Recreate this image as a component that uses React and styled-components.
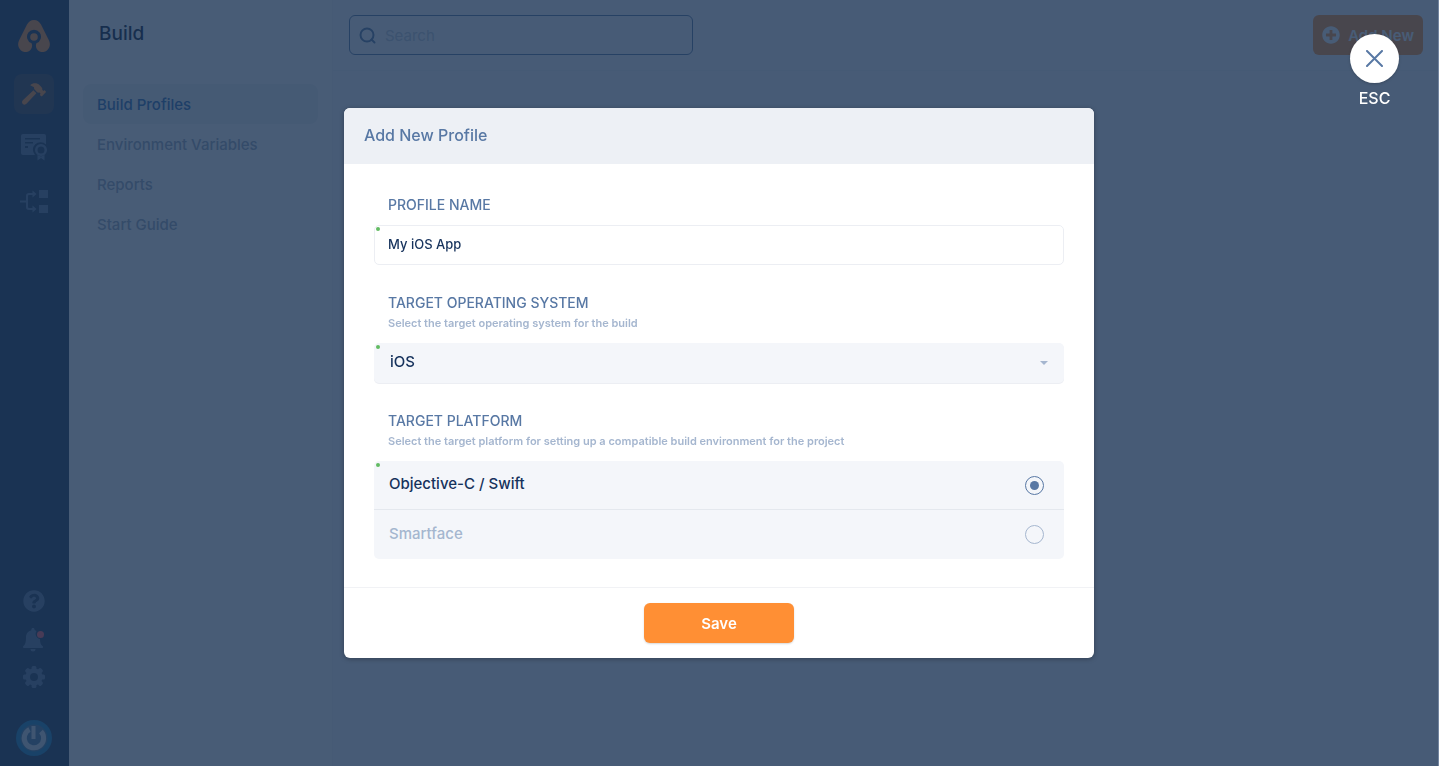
import React from "react";
import styled, { createGlobalStyle } from "styled-components";
import { FaHammer, FaQuestionCircle, FaPlusCircle } from "react-icons/fa";

const GlobalStyle = createGlobalStyle`
  *, *::before, *::after { box-sizing: border-box; }
  html { background: #10141c; }
  body { margin: 0; font-family: Inter, "Liberation Sans", sans-serif; font-size: 15px; color: #16325c; }
  button, input, select { font: inherit; color: inherit; margin: 0; }
  svg { display: block; }
`;

const Page = styled.div`
  display: flex;
  min-height: 100vh;
  background: #fff;
`;

const Rail = styled.nav`
  display: flex;
  flex-direction: column;
  align-items: center;
  width: 69px;
  padding: 20px 1px 10px 0;
  background: #1a3352;
  color: #5d7698;
`;

const RailGroup = styled.div`
  display: flex;
  flex-direction: column;
  align-items: center;
  gap: ${(p) => p.$gap}px;
  margin-top: ${(p) => (p.$end ? "auto" : "22px")};
`;

const RailLink = styled.a`
  display: grid;
  place-items: center;
  width: 40px;
  height: ${(p) => (p.$small ? 22 : 40)}px;
  border-radius: 8px;
  color: ${(p) => (p.$active ? "#ff8f34" : "inherit")};
  background: ${(p) => (p.$active ? "rgba(255, 143, 52, 0.16)" : "transparent")};
`;

const Avatar = styled.a`
  margin-top: 32px;
`;

const SidePanel = styled.aside`
  width: 264px;
  padding: 20px 14px 0 14px;
  background: #fff;
  border-right: 1px solid #f4f6fa;
`;

const PanelTitle = styled.h1`
  margin: 0 0 36px;
  padding-left: 16px;
  font-size: 19px;
  line-height: 28px;
  font-weight: 500;
  color: #0c1c38;
`;

const PanelLink = styled.a`
  display: flex;
  align-items: center;
  height: 40px;
  padding: 0 14px;
  border-radius: 8px;
  font-weight: 500;
  text-decoration: none;
  color: ${(p) => (p.$active ? "#2f6fb5" : "#9aa8bc")};
  background: ${(p) => (p.$active ? "#f0f2f6" : "transparent")};
`;

const Main = styled.main`
  flex: 1;
  background: #f8fafd;
`;

const TopBar = styled.header`
  display: flex;
  align-items: center;
  justify-content: space-between;
  height: 71px;
  padding: 0 16px;
  border-bottom: 1px solid #f1f4f8;
`;

const SearchBox = styled.label`
  display: flex;
  align-items: center;
  gap: 9px;
  width: 344px;
  height: 40px;
  padding: 0 9px;
  border: 1px solid #5878a4;
  border-radius: 6px;
  color: #5878a4;
`;

const SearchInput = styled.input`
  flex: 1;
  min-width: 0;
  padding: 0;
  border: 0;
  outline: 0;
  background: transparent;
  &::placeholder { color: #c0cbda; opacity: 1; }
`;

const AddButton = styled.button`
  display: flex;
  align-items: center;
  gap: 8px;
  height: 40px;
  padding: 0 9px;
  border: 0;
  border-radius: 6px;
  background: #ff8f34;
  color: #fff;
  font-weight: 600;
`;

const Overlay = styled.div`
  position: fixed;
  inset: 0;
  display: flex;
  align-items: center;
  justify-content: center;
  border-right: 1px solid #7385a0;
  background: rgba(26, 51, 84, 0.8);
`;

const Modal = styled.form`
  width: 750px;
  max-width: 100%;
  border-radius: 6px;
  overflow: hidden;
  background: #fff;
  box-shadow: 0 1px 5px rgba(0, 0, 0, 0.3);
`;

const ModalHeader = styled.h2`
  margin: 0;
  padding: 15px 20px 17px;
  font-size: 16px;
  line-height: 24px;
  font-weight: 500;
  color: #5878a4;
  background: #edf0f5;
`;

const ModalBody = styled.div`
  display: flex;
  flex-direction: column;
  gap: 28px;
  padding: 31px 30px 28px;
`;

const Field = styled.div`
  margin: 0;
`;

const Caption = styled.label`
  display: block;
  padding-left: 14px;
  font-size: 14px;
  line-height: 20px;
  font-weight: 500;
  color: #5878a4;
`;

const Hint = styled.p`
  margin: 0;
  padding-left: 14px;
  font-size: 11px;
  line-height: 20px;
  font-weight: 600;
  color: #a5b6cf;
`;

const Control = styled.div`
  position: relative;
  margin-top: 10px;
`;

const RequiredDot = styled.span`
  position: absolute;
  top: 2px;
  left: 2px;
  width: 4px;
  height: 4px;
  border-radius: 50%;
  background: #62bb62;
`;

const TextInput = styled.input`
  display: block;
  width: 100%;
  height: 40px;
  padding: 0 13px 3px;
  border: 1px solid #eceef3;
  border-radius: 5px;
  outline: 0;
  font-size: 13px;
  font-weight: 500;
`;

const Select = styled.select`
  display: block;
  appearance: none;
  width: 100%;
  height: 40px;
  padding: 0 16px 4px;
  border: 0;
  border-radius: 5px;
  box-shadow: 0 1px 0 #eceef3;
  outline: 0;
  font-weight: 500;
  background: #f4f6fa;
`;

const Caret = styled.svg`
  position: absolute;
  top: 18px;
  right: 16px;
  pointer-events: none;
`;

const RadioList = styled.div`
  border-radius: 5px;
  background: #f4f6fa;
`;

const RadioRow = styled.label`
  display: flex;
  align-items: center;
  justify-content: space-between;
  height: 48px;
  padding: 0 20px 0 15px;
  font-weight: 500;
  color: #a5b6cf;
  & + & { height: 50px; border-top: 1px solid #e4e8ee; }
  &:has(input:checked) { color: #16325c; }
`;

const RadioText = styled.span`
  padding-bottom: 3px;
`;

const Radio = styled.input`
  appearance: none;
  display: grid;
  place-items: center;
  width: 19px;
  height: 19px;
  border: 1px solid #a5b6cf;
  border-radius: 50%;
  &:checked { border-color: #5878a4; }
  &:checked::before {
    content: "";
    width: 9px;
    height: 9px;
    border-radius: 50%;
    background: #5878a4;
  }
`;

const ModalFooter = styled.footer`
  display: flex;
  justify-content: center;
  padding: 15px;
  border-top: 1px solid #f1f2f5;
`;

const SaveButton = styled.button`
  width: 150px;
  height: 40px;
  border: 0;
  border-radius: 6px;
  background: #ff8f34;
  box-shadow: 0 1px 2px rgba(0, 0, 0, 0.16);
  color: #fff;
  font-weight: 600;
`;

const CloseButton = styled.button`
  position: absolute;
  top: 34px;
  right: 39px;
  display: flex;
  flex-direction: column;
  align-items: center;
  gap: 5px;
  width: 49px;
  padding: 0;
  border: 0;
  background: none;
  color: #fff;
  font-size: 16px;
  line-height: 20px;
  font-weight: 500;
`;

const CloseDisc = styled.span`
  display: grid;
  place-items: center;
  width: 49px;
  height: 49px;
  border-radius: 50%;
  background: #fff;
  box-shadow: 0 1px 3px rgba(0, 0, 0, 0.2);
`;

const Logo = () => (
  <svg width="32" height="32" viewBox="0 0 32 32" aria-hidden="true">
    <path
      fill="#ff8f34"
      d="M16 0c-3.200 0-5.500 1.700-7 4.600L1 20.500C-.6 24 0 28 3 30.500c3 2.400 7.500 2 9.800-1 1.400-1.800 1.700-4.200.8-6.200A7 7 0 1 1 18.400 23.300c-.9 2-.6 4.400.8 6.200 2.300 3 6.800 3.400 9.800 1 3-2.500 3.600-6.500 2-10L23 4.600C21.500 1.700 19.200 0 16 0z"
    />
    <circle cx="16" cy="17" r="3.800" fill="#ff8f34" />
  </svg>
);

const CertificateIcon = () => (
  <svg width="28" height="28" viewBox="0 0 28 28" fill="currentColor" aria-hidden="true">
    <path fillRule="evenodd" d="M3 0h21a2 2 0 0 1 2 2v8.500a7.500 7.500 0 0 0-11 10.500H3a2 2 0 0 1-2-2V2a2 2 0 0 1 2-2zM5 4v1.500h15V4zM5 8v1.500h8V8zM5 12v2h3v-2z" />
    <path fillRule="evenodd" d="M21 10a6 6 0 1 1 0 12 6 6 0 0 1 0-12zm0 2.500a3.500 3.500 0 1 0 0 7 3.500 3.500 0 0 0 0-7z" />
    <path d="M17.500 21l3.500 1.500 3.500-1.500v5.500L21 24l-3.500 2.500z" />
  </svg>
);

const FlowIcon = () => (
  <svg width="28" height="24" viewBox="0 0 28 24" fill="currentColor" aria-hidden="true">
    <rect x="19" y="0" width="9" height="8" />
    <rect x="19" y="15" width="9" height="8" />
    <path d="M0 11.500h7M14 4H9a2 2 0 0 0-2 2v11a2 2 0 0 0 2 2h5" fill="none" stroke="currentColor" strokeWidth="2" />
    <path d="M12.500 0.500L16.500 4l-4 3.500zM12.500 15.500l4 3.500-4 3.500z" />
  </svg>
);

const BellIcon = () => (
  <svg width="22" height="24" viewBox="0 0 22 24" aria-hidden="true">
    <path
      fill="currentColor"
      d="M10 0c1 0 1.600.7 1.600 1.600v.6c.7.200 1.300.5 1.900.9A5 5 0 0 0 17 10.900c0 4 .8 5.800 2.500 7.100.9.800.500 2-.5 2H1c-1 0-1.400-1.200-.5-2C2.300 16.600 3 14 3 9.500c0-3.700 2-6.500 5.400-7.300v-.6C8.400.7 9 0 10 0zM7.500 21h5a2.500 2.500 0 0 1-5 0z"
    />
    <circle cx="17.500" cy="6.500" r="3.500" fill="#ff5a5f" />
  </svg>
);

const GearIcon = () => (
  <svg width="22" height="22" viewBox="0 0 22 22" fill="currentColor" aria-hidden="true">
    <mask id="gear-hole" maskUnits="userSpaceOnUse" x="0" y="0" width="22" height="22">
      <rect width="22" height="22" fill="#fff" />
      <circle cx="11" cy="11" r="4" fill="#000" />
    </mask>
    <g mask="url(#gear-hole)">
      <circle cx="11" cy="11" r="8.500" />
      {[0, 45, 90, 135].map((angle) => (
        <rect key={angle} x="8.600" y="0" width="4.800" height="22" rx="1.500" transform={`rotate(${angle} 11 11)`} />
      ))}
    </g>
  </svg>
);

const PowerAvatar = () => (
  <svg width="36" height="36" viewBox="0 0 36 36" aria-hidden="true">
    <circle cx="18" cy="18" r="18" fill="#147fb8" />
    <circle cx="18" cy="18" r="13.500" fill="#4d7ba0" />
    <path d="M13.500 9.500a9.700 9.700 0 1 0 11.500 2" fill="none" stroke="#d3dce6" strokeWidth="5" />
    <path d="M15.500 6h4v13h-4z" fill="#d3dce6" />
  </svg>
);

const SearchIcon = () => (
  <svg width="17" height="17" viewBox="0 0 17 17" fill="none" stroke="currentColor" strokeWidth="2" aria-hidden="true">
    <circle cx="8" cy="8" r="6.500" />
    <path d="M12.500 12.500l3 3" strokeLinecap="round" />
  </svg>
);

const CloseIcon = () => (
  <svg width="17" height="17" viewBox="0 0 17 17" fill="none" stroke="#5878a4" strokeWidth="2" strokeLinecap="round" aria-hidden="true">
    <path d="M1 1l15 15M16 1L1 16" />
  </svg>
);

const panelLinks = ["Build Profiles", "Environment Variables", "Reports", "Start Guide"];
const platforms = ["Objective-C / Swift", "Smartface"];

export default function App() {
  return (
    <>
      <GlobalStyle />
      <Page>
        <Rail aria-label="Modules">
          <Logo />
          <RailGroup $gap={14}>
            <RailLink href="#build" $active aria-label="Build"><FaHammer size={24} /></RailLink>
            <RailLink href="#signing" aria-label="Signing"><CertificateIcon /></RailLink>
            <RailLink href="#workflow" aria-label="Workflow"><FlowIcon /></RailLink>
          </RailGroup>
          <RailGroup $gap={16} $end>
            <RailLink href="#help" $small aria-label="Help"><FaQuestionCircle size={22} /></RailLink>
            <RailLink href="#alerts" $small aria-label="Notifications"><BellIcon /></RailLink>
            <RailLink href="#settings" $small aria-label="Settings"><GearIcon /></RailLink>
          </RailGroup>
          <Avatar href="#account" aria-label="Account"><PowerAvatar /></Avatar>
        </Rail>
        <SidePanel>
          <PanelTitle>Build</PanelTitle>
          {panelLinks.map((text, i) => (
            <PanelLink key={text} href="#section" $active={i === 0}>{text}</PanelLink>
          ))}
        </SidePanel>
        <Main>
          <TopBar>
            <SearchBox>
              <SearchIcon />
              <SearchInput type="search" placeholder="Search" aria-label="Search" />
            </SearchBox>
            <AddButton type="button"><FaPlusCircle size={18} />Add New</AddButton>
          </TopBar>
        </Main>
      </Page>
      <Overlay>
        <Modal role="dialog" aria-labelledby="modal-title" onSubmit={(e) => e.preventDefault()}>
          <ModalHeader id="modal-title">Add New Profile</ModalHeader>
          <ModalBody>
            <Field>
              <Caption htmlFor="profile-name">PROFILE NAME</Caption>
              <Control>
                <TextInput id="profile-name" defaultValue="My iOS App" />
                <RequiredDot />
              </Control>
            </Field>
            <Field>
              <Caption htmlFor="target-os">TARGET OPERATING SYSTEM</Caption>
              <Hint>Select the target operating system for the build</Hint>
              <Control>
                <Select id="target-os" defaultValue="iOS">
                  <option>iOS</option>
                  <option>Android</option>
                </Select>
                <Caret width="8" height="4" viewBox="0 0 8 4" fill="#a5b6cf" aria-hidden="true">
                  <path d="M0 0h8L4 4z" />
                </Caret>
                <RequiredDot />
              </Control>
            </Field>
            <Field role="radiogroup" aria-labelledby="platform-caption">
              <Caption as="div" id="platform-caption">TARGET PLATFORM</Caption>
              <Hint>Select the target platform for setting up a compatible build environment for the project</Hint>
              <Control>
                <RadioList>
                  {platforms.map((name, i) => (
                    <RadioRow key={name}>
                      <RadioText>{name}</RadioText>
                      <Radio type="radio" name="platform" value={name} defaultChecked={i === 0} />
                    </RadioRow>
                  ))}
                </RadioList>
                <RequiredDot />
              </Control>
            </Field>
          </ModalBody>
          <ModalFooter>
            <SaveButton type="submit">Save</SaveButton>
          </ModalFooter>
        </Modal>
        <CloseButton type="button">
          <CloseDisc><CloseIcon /></CloseDisc>
          ESC
        </CloseButton>
      </Overlay>
    </>
  );
}
